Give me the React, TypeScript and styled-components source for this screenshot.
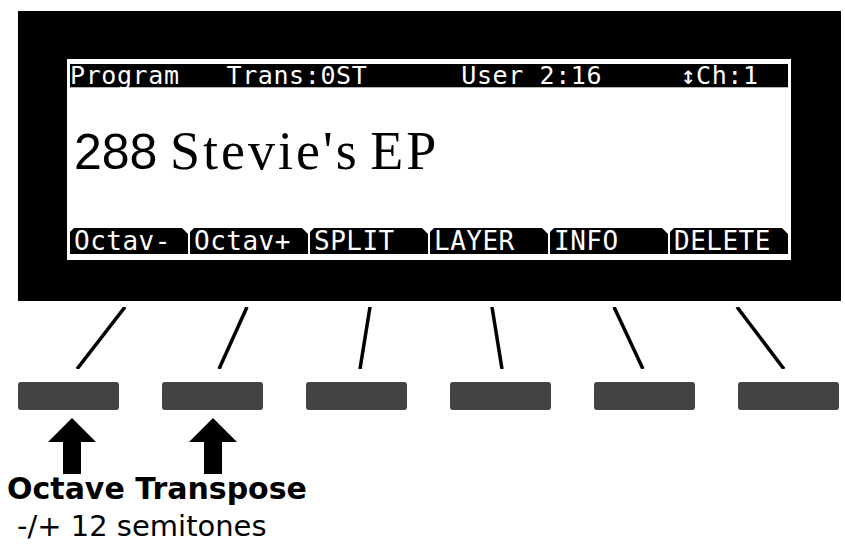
import styled, { createGlobalStyle } from "styled-components";

const Global = createGlobalStyle`
  html, body {
    margin: 0;
    background: #ffffff;
    overflow: hidden;
  }
`;

const Page = styled.div`
  width: 845px;
  padding-top: 11px;
  box-sizing: border-box;
`;

const Panel = styled.div`
  margin-left: 18px;
  width: 823px;
  height: 290px;
  background: #000;
  padding: 48px 0 0 49px;
  box-sizing: border-box;
`;

const Screen = styled.div`
  width: 724px;
  height: 201px;
  background: #fff;
  padding: 5px 3px 6px;
  box-sizing: border-box;
  display: flex;
  flex-direction: column;
`;

const StatusBar = styled.div`
  height: 23px;
  background: #000;
  color: #fff;
  font-family: "DejaVu Sans Mono", monospace;
  font-size: 25px;
  line-height: 23px;
  letter-spacing: 0.6px;
  white-space: pre;
  box-shadow: 0 1px 0 #b5b5b5;
`;

const Title = styled.div`
  margin: 39px 0 0 4px;
  font-size: 50px;
  line-height: 50px;
  color: #000;
  white-space: pre;
`;

const Num = styled.span`
  font-family: "Liberation Sans", Arial, sans-serif;
`;

const Name = styled.span`
  font-family: "Liberation Serif", "Times New Roman", serif;
  font-size: 54px;
  letter-spacing: 3px;
  word-spacing: -6px;
`;

const SoftBar = styled.div`
  margin-top: auto;
  display: flex;
  gap: 2px;
  height: 26px;
`;

const Tab = styled.div`
  position: relative;
  flex: 1;
  background: #000;
  color: #fff;
  font-family: "DejaVu Sans Mono", monospace;
  font-size: 26px;
  line-height: 26px;
  letter-spacing: 0.5px;
  padding-left: 4px;
  white-space: pre;

  &::before,
  &::after {
    content: "";
    position: absolute;
    top: 0;
    border-style: solid;
    border-color: transparent;
  }

  &::before {
    left: 0;
    border-width: 4px 4px 0 0;
    border-top-color: #fff;
  }

  &::after {
    right: 0;
    border-width: 6px 0 0 6px;
    border-top-color: #fff;
  }
`;

const Connectors = styled.svg`
  display: block;
  margin-top: 6px;
`;

const Keys = styled.div`
  display: flex;
  gap: 43px;
  padding-left: 18px;
  margin-top: 13px;
`;

const Key = styled.div`
  width: 101px;
  height: 28px;
  background: #434343;
  border-radius: 3px;
`;

const Arrows = styled.div`
  display: flex;
  gap: 93px;
  padding-left: 48px;
  margin-top: 8px;
`;

const Caption = styled.div`
  margin: 0 0 0 7px;
  font-family: "DejaVu Sans", Verdana, sans-serif;
  font-weight: 700;
  font-size: 30px;
  line-height: 30px;
  color: #000;
`;

const SubCaption = styled.div`
  margin: 9px 0 0 17px;
  font-family: "DejaVu Sans", Verdana, sans-serif;
  font-size: 29px;
  line-height: 26px;
  color: #000;
`;

const lines = [
  [125, 77],
  [247, 219],
  [370, 360],
  [492, 502],
  [614, 643],
  [737, 784],
];

const labels = ["Octav-", "Octav+", "SPLIT", "LAYER", "INFO", "DELETE"];

function UpArrow() {
  return (
    <svg width="48" height="56" viewBox="0 0 48 56">
      <path d="M24 0 L48 24 L33 24 L33 56 L15 56 L15 24 L0 24 Z" fill="#000" />
    </svg>
  );
}

export default function App() {
  return (
    <>
      <Global />
      <Page>
        <Panel>
          <Screen>
            <StatusBar>{"Program   Trans:0ST      User 2:16     \u2195Ch:1"}</StatusBar>
            <Title>
              <Num>288</Num> <Name>Stevie's EP</Name>
            </Title>
            <SoftBar>
              {labels.map((l) => (
                <Tab key={l}>{l}</Tab>
              ))}
            </SoftBar>
          </Screen>
        </Panel>
        <Connectors width="845" height="62" viewBox="0 0 845 62">
          {lines.map(([a, b], i) => (
            <line key={i} x1={a} y1={0} x2={b} y2={62} stroke="#000" strokeWidth="3.5" />
          ))}
        </Connectors>
        <Keys>
          {labels.map((l) => (
            <Key key={l} />
          ))}
        </Keys>
        <Arrows>
          <UpArrow />
          <UpArrow />
        </Arrows>
        <Caption>Octave Transpose</Caption>
        <SubCaption>-/+ 12 semitones</SubCaption>
      </Page>
    </>
  );
}
